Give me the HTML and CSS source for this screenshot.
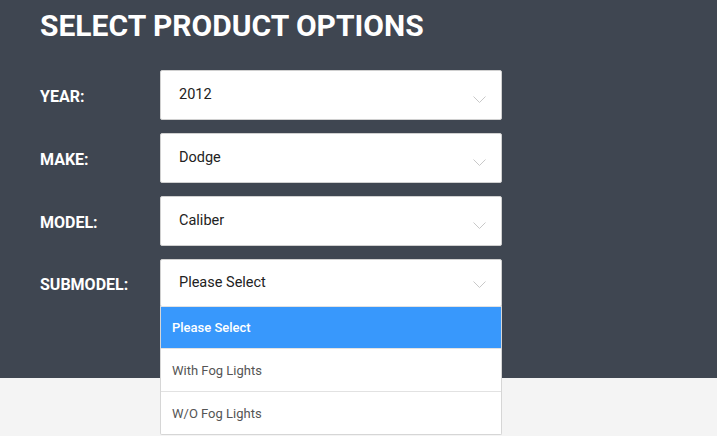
FILE: index.html
```html
<!DOCTYPE html>
<html>
<head>
<meta charset="utf-8">
<link rel="stylesheet" href="styles.css">
</head>
<body>
<div class="panel">
  <h1 class="title">SELECT PRODUCT OPTIONS</h1>
  <div class="form">
    <div class="label">YEAR:</div>
    <div class="select"><span>2012</span><svg class="chev" viewBox="0 0 13 7"><path d="M0.5 0.5 L6.5 6.5 L12.5 0.5"/></svg></div>
    <div class="label">MAKE:</div>
    <div class="select"><span>Dodge</span><svg class="chev" viewBox="0 0 13 7"><path d="M0.5 0.5 L6.5 6.5 L12.5 0.5"/></svg></div>
    <div class="label">MODEL:</div>
    <div class="select"><span>Caliber</span><svg class="chev" viewBox="0 0 13 7"><path d="M0.5 0.5 L6.5 6.5 L12.5 0.5"/></svg></div>
    <div class="label">SUBMODEL:</div>
    <div class="select open"><span>Please Select</span><svg class="chev" viewBox="0 0 13 7"><path d="M0.5 0.5 L6.5 6.5 L12.5 0.5"/></svg>
      <ul class="menu">
        <li class="active">Please Select</li>
        <li>With Fog Lights</li>
        <li>W/O Fog Lights</li>
      </ul>
    </div>
  </div>
</div>
<div class="footer"></div>
</body>
</html>
```
FILE: styles.css
```css
html, body {
  margin: 0;
  padding: 0;
}
body {
  background: #f4f4f4;
  font-family: Roboto, "Liberation Sans", sans-serif;
}
.panel {
  position: relative;
  z-index: 1;
  background: #3f4651;
  height: 378px;
  padding: 8px 40px 0;
  box-sizing: border-box;
}
.footer {
  height: 58px;
  background: #f4f4f4;
}
.title {
  margin: 0;
  color: #fff;
  font-size: 30px;
  line-height: 36px;
  font-weight: 700;
}
.form {
  margin-top: 26px;
  display: grid;
  grid-template-columns: 120px 342px;
  row-gap: 13px;
}
.label {
  color: #fff;
  font-weight: 700;
  font-size: 16px;
  display: flex;
  align-items: center;
  padding-top: 3px;
}
.select {
  position: relative;
  height: 50px;
  box-sizing: border-box;
  background: #fff;
  border: 1px solid #d0d0d0;
  border-radius: 2px;
  display: flex;
  align-items: center;
  justify-content: space-between;
  padding: 0 15px 0 18px;
  font-size: 14.5px;
  color: #222;
}
.select span {
  margin-top: -1px;
}
.chev {
  width: 13px;
  height: 7px;
  margin-top: 9px;
  fill: none;
  stroke: #c8c8c8;
  stroke-width: 1;
}
.open {
  height: 48px;
}
.open .chev {
  margin-top: 3px;
}
.menu {
  position: absolute;
  left: -1px;
  right: -1px;
  top: 46px;
  margin: 0;
  padding: 0;
  list-style: none;
  background: #fff;
  border: 1px solid #d6d6d6;
  border-top: none;
  border-radius: 0 0 2px 2px;
}
.menu li {
  height: 43px;
  box-sizing: border-box;
  padding-left: 11px;
  display: flex;
  align-items: center;
  font-size: 13px;
  color: #555;
  border-top: 1px solid #e2e2e2;
}
.menu li.active {
  background: #3898fc;
  color: #fff;
  border-top: 1px solid #e2e2e2;
  height: 42px;
  font-weight: 500;
}
```
